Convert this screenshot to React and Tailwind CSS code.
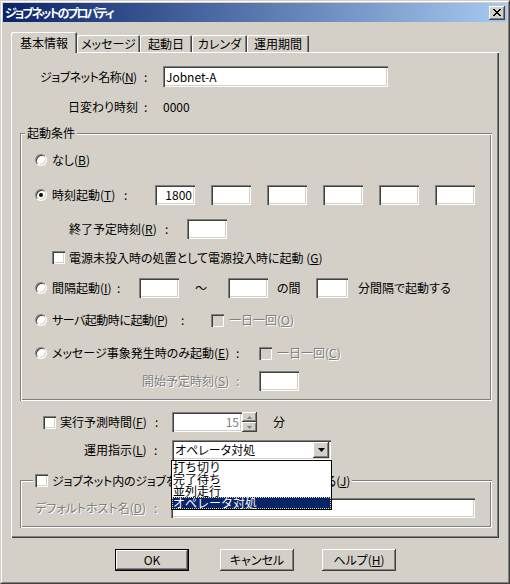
import React from "react";

// classic win 3d edges
const RAISED =
  "bg-[#d4d0c8] shadow-[inset_-1px_-1px_0_#404040,inset_1px_1px_0_#fff,inset_-2px_-2px_0_#808080,inset_2px_2px_0_#d4d0c8]";
const SUNKEN_EDGE =
  "shadow-[inset_1px_1px_0_#808080,inset_2px_2px_0_#404040,inset_-1px_-1px_0_#fff,inset_-2px_-2px_0_#d4d0c8]";
const ETCHED =
  "shadow-[inset_1px_1px_0_#808080,inset_2px_2px_0_#fff,inset_-1px_-1px_0_#fff,inset_-2px_-2px_0_#808080]";
const DIS = "text-[#808080] [text-shadow:1px_1px_0_#fff]";

function Field({ className = "", children }) {
  return (
    <div
      className={`bg-white ${SUNKEN_EDGE} shrink-0 flex items-center px-[3px] whitespace-nowrap ${className}`}
    >
      {children}
    </div>
  );
}

function Radio({ checked, className = "" }) {
  return (
    <span
      className={`w-[12px] h-[12px] shrink-0 rounded-full bg-white border border-t-[#808080] border-l-[#808080] border-r-white border-b-white shadow-[inset_1px_1px_0_#404040,inset_-1px_-1px_0_#d4d0c8] flex items-center justify-center ${className}`}
    >
      {checked && <span className="w-[4px] h-[4px] rounded-full bg-black" />}
    </span>
  );
}

function Check({ disabled, className = "" }) {
  return (
    <span
      className={`w-[13px] h-[13px] shrink-0 ${disabled ? "bg-[#d4d0c8]" : "bg-white"} ${SUNKEN_EDGE} ${className}`}
    />
  );
}

function Colon({ className }) {
  return <span className={`shrink-0 ${className}`}>:</span>;
}

function Tab({ selected, className, children }) {
  return (
    <div
      className={`shrink-0 flex items-center justify-center rounded-t-[2px] bg-[#d4d0c8] shadow-[inset_1px_1px_0_#fff,inset_-1px_0_0_#404040,inset_-2px_0_0_#808080] ${selected ? "h-[21px] -mb-px" : "h-[17px]"} ${className}`}
    >
      {children}
    </div>
  );
}

function Arrow({ up, color = "#000", w = 7 }) {
  const h = Math.ceil(w / 2);
  return (
    <svg width={w} height={h} viewBox={`0 0 ${w} ${h}`}>
      <polygon
        points={up ? `0,${h} ${w},${h} ${w / 2},0` : `0,0 ${w},0 ${w / 2},${h}`}
        fill={color}
      />
    </svg>
  );
}

function Btn({ isDefault, className = "", children }) {
  return (
    <div className={`shrink-0 h-[22px] w-[74px] ${isDefault ? "border border-black" : ""} ${className}`}>
      <div className={`h-full w-full flex items-center justify-center ${RAISED}`}>{children}</div>
    </div>
  );
}

export default function App() {
  return (
    <div className="w-[510px] h-[584px] bg-[#d4d0c8] text-black text-[12px] leading-[14px] font-['Noto_Sans_CJK_JP',sans-serif] [font-feature-settings:'palt'] border border-t-[#d4d0c8] border-l-[#d4d0c8] border-r-[#404040] border-b-[#404040]">
      <div className="h-full border border-t-white border-l-white border-r-[#808080] border-b-[#808080] p-px flex flex-col">
        {/* title bar */}
        <div className="h-[19px] shrink-0 flex items-center px-[2px] bg-[linear-gradient(to_right,#0a246a,#a6caf0)]">
          <span className="text-white font-bold tracking-[-2px]">ジョブネットのプロパティ</span>
          <div className={`ml-auto w-[16px] h-[14px] ${RAISED} flex items-center justify-center`}>
            <svg width="8" height="7" viewBox="0 0 8 7" shapeRendering="crispEdges">
              <path
                d="M0 0h2v1H0zM6 0h2v1H6zM1 1h2v1H1zM5 1h2v1H5zM2 2h4v1H2zM3 3h2v1H3zM2 4h4v1H2zM1 5h2v1H1zM5 5h2v1H5zM0 6h2v1H0zM6 6h2v1H6z"
                fill="#000"
              />
            </svg>
          </div>
        </div>

        {/* tabs */}
        <div className="mt-[10px] ml-[8px] h-[20px] flex items-end relative z-10">
          <Tab selected className="w-[66px]">基本情報</Tab>
          <Tab className="w-[63px]">メッセージ</Tab>
          <Tab className="w-[52px]">起動日</Tab>
          <Tab className="w-[55px]">カレンダ</Tab>
          <Tab className="w-[62px]">運用期間</Tab>
        </div>

        {/* tab panel */}
        <div className="ml-[8px] w-[488px] h-[486px] shrink-0 flex flex-col shadow-[inset_1px_1px_0_#fff,inset_-1px_-1px_0_#404040,inset_-2px_-2px_0_#808080]">
          <div className="mt-[14px] h-[21px] flex items-center">
            <span className="ml-[29px] w-[104px] shrink-0 whitespace-nowrap tracking-[-0.5px]">
              ジョブネット名称(<u>N</u>)
            </span>
            <Colon className="w-[19px]" />
            <Field className="w-[225px] h-[21px]">Jobnet-A</Field>
          </div>

          <div className="mt-[13px] h-[14px] flex items-center">
            <span className="ml-[57px] w-[76px] shrink-0 whitespace-nowrap">日変わり時刻</span>
            <Colon className="w-[19px]" />
            <span>0000</span>
          </div>

          {/* 起動条件 */}
          <div className={`relative mt-[19px] ml-[9px] w-[472px] h-[268px] shrink-0 flex flex-col ${ETCHED}`}>
            <span className="absolute left-[5px] -top-[7px] px-[2px] bg-[#d4d0c8]">起動条件</span>

            <div className="mt-[20px] h-[14px] flex items-center">
              <Radio className="ml-[15px]" />
              <span className="ml-[5px]">
                なし(<u>B</u>)
              </span>
            </div>

            <div className="mt-[18px] h-[20px] flex items-center">
              <Radio checked className="ml-[15px]" />
              <span className="ml-[5px] w-[72px] shrink-0 whitespace-nowrap">
                時刻起動(<u>T</u>)
              </span>
              <Colon className="w-[31px]" />
              <div className="flex gap-[16px]">
                <Field className="w-[40px] h-[20px] justify-end">1800</Field>
                <Field className="w-[40px] h-[20px]" />
                <Field className="w-[40px] h-[20px]" />
                <Field className="w-[40px] h-[20px]" />
                <Field className="w-[40px] h-[20px]" />
                <Field className="w-[40px] h-[20px]" />
              </div>
            </div>

            <div className="mt-[14px] h-[20px] flex items-center">
              <span className="ml-[49px] w-[96px] shrink-0 whitespace-nowrap">
                終了予定時刻(<u>R</u>)
              </span>
              <Colon className="w-[22px]" />
              <Field className="w-[40px] h-[20px]" />
            </div>

            <div className="mt-[12px] h-[13px] flex items-center">
              <Check className="ml-[32px]" />
              <span className="ml-[4px] whitespace-nowrap">
                電源未投入時の処置として電源投入時に起動 (<u>G</u>)
              </span>
            </div>

            <div className="mt-[14px] h-[20px] flex items-center">
              <Radio className="ml-[15px]" />
              <span className="ml-[5px] w-[65px] shrink-0 whitespace-nowrap">
                間隔起動(<u>I</u>)
              </span>
              <Colon className="w-[22px]" />
              <Field className="w-[40px] h-[20px]" />
              <span className="w-[49px] shrink-0 pl-[16px]">～</span>
              <Field className="w-[40px] h-[20px]" />
              <span className="w-[48px] shrink-0 pl-[9px]">の間</span>
              <Field className="w-[32px] h-[20px]" />
              <span className="ml-[10px] whitespace-nowrap">分間隔で起動する</span>
            </div>

            <div className="mt-[15px] h-[14px] flex items-center">
              <Radio className="ml-[15px]" />
              <span className="ml-[5px] w-[129px] shrink-0 whitespace-nowrap tracking-[-0.5px]">
                サーバ起動時に起動(<u>P</u>)
              </span>
              <Colon className="w-[30px]" />
              <Check disabled />
              <span className={`ml-[5px] whitespace-nowrap ${DIS}`}>
                一日一回(<u>O</u>)
              </span>
            </div>

            <div className="mt-[19px] h-[14px] flex items-center">
              <Radio className="ml-[15px]" />
              <span className="ml-[5px] w-[184px] shrink-0 whitespace-nowrap">
                メッセージ事象発生時のみ起動(<u>E</u>)
              </span>
              <Colon className="w-[23px]" />
              <Check disabled />
              <span className={`ml-[5px] whitespace-nowrap ${DIS}`}>
                一日一回(<u>C</u>)
              </span>
            </div>

            <div className="mt-[11px] h-[20px] flex items-center">
              <span className={`ml-[122px] w-[94px] shrink-0 whitespace-nowrap ${DIS}`}>
                開始予定時刻(<u>S</u>)
              </span>
              <span className={`w-[23px] shrink-0 ${DIS}`}>:</span>
              <Field className="w-[40px] h-[20px]" />
            </div>
          </div>

          {/* 実行予測時間 */}
          <div className="mt-[11px] h-[20px] flex items-center">
            <Check className="ml-[32px]" />
            <span className="ml-[4px] w-[95px] shrink-0 whitespace-nowrap">
              実行予測時間(<u>F</u>)
            </span>
            <Colon className="w-[17px]" />
            <Field className="w-[70px] h-[20px] justify-end">
              <span className="text-[#808080]">15</span>
            </Field>
            <div className="flex flex-col w-[15px] h-[20px] shrink-0">
              <div className={`h-[10px] ${RAISED} flex items-center justify-center`}>
                <Arrow up w={5} color="#808080" />
              </div>
              <div className={`h-[10px] ${RAISED} flex items-center justify-center`}>
                <Arrow w={5} color="#808080" />
              </div>
            </div>
            <span className="ml-[16px]">分</span>
          </div>

          {/* 運用指示 */}
          <div className="mt-[8px] h-[20px] flex items-center relative z-20">
            <span className="ml-[73px] w-[70px] shrink-0 whitespace-nowrap">
              運用指示(<u>L</u>)
            </span>
            <Colon className="w-[18px]" />
            <div className={`relative w-[159px] h-[20px] shrink-0 bg-white ${SUNKEN_EDGE} flex items-center p-[2px]`}>
              <span className="flex-1 pl-[1px] whitespace-nowrap">オペレータ対処</span>
              <div className={`w-[16px] h-[16px] ${RAISED} flex items-center justify-center`}>
                <Arrow />
              </div>
              <div className="absolute left-[-1px] top-[20px] w-[161px] h-[50px] bg-white border border-black flex flex-col text-[12px] leading-[12px] [font-feature-settings:normal]">
                <div className="h-[12px] pl-[1px] flex items-center">打ち切り</div>
                <div className="h-[12px] pl-[1px] flex items-center">完了待ち</div>
                <div className="h-[12px] pl-[1px] flex items-center">並列走行</div>
                <div className="h-[12px] pl-[1px] flex items-center bg-[#0a246a] text-white outline outline-1 outline-dotted outline-[#e8dc80] -outline-offset-1">
                  オペレータ対処
                </div>
              </div>
            </div>
          </div>

          {/* ジョブネット内のジョブ */}
          <div className={`relative mt-[20px] ml-[9px] w-[472px] h-[48px] shrink-0 flex flex-col ${ETCHED}`}>
            <div className="absolute left-[13px] -top-[6px] px-[2px] h-[13px] flex items-center bg-[#d4d0c8]">
              <Check />
              <span className="ml-[4px] whitespace-nowrap tracking-[-0.2px]">
                ジョブネット内のジョブを全てデフォルトホストで実行する(<u>J</u>)
              </span>
            </div>
            <div className="mt-[18px] h-[20px] flex items-center">
              <span className={`ml-[15px] w-[119px] shrink-0 whitespace-nowrap ${DIS}`}>
                デフォルトホスト名(<u>D</u>)
              </span>
              <span className={`w-[17px] shrink-0 ${DIS}`}>:</span>
              <Field className="w-[304px] h-[20px]" />
            </div>
          </div>
        </div>

        {/* buttons */}
        <div className="mt-[11px] h-[22px] flex">
          <Btn isDefault className="ml-[112px]">OK</Btn>
          <Btn className="ml-[31px]">キャンセル</Btn>
          <Btn className="ml-[28px]">
            ヘルプ(<u>H</u>)
          </Btn>
        </div>
      </div>
    </div>
  );
}
